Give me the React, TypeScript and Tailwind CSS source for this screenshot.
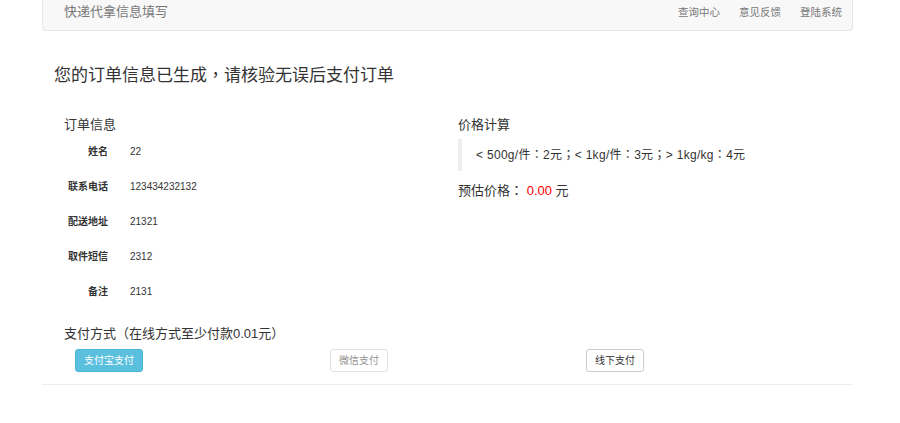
import React from 'react';

const FONT = { fontFamily: '"Liberation Sans", "Noto Sans CJK SC", sans-serif' };

const ORDER = [
  { label: '姓名', value: '22' },
  { label: '联系电话', value: '123434232132' },
  { label: '配送地址', value: '21321' },
  { label: '取件短信', value: '2312' },
  { label: '备注', value: '2131' },
];

// full-width punctuation drawn centered, as in the original page
const P = ({ c }: { c: string }) => (
  <span className="leading-none" style={{ fontFamily: '"Noto Sans CJK TC", sans-serif' }}>
    {c}
  </span>
);

export default function App() {
  return (
    <div className="min-h-[423px] w-full bg-white text-[#333]" style={FONT}>
      <div className="ml-[42px] w-[811px]">
        {/* Navbar */}
        <nav className="flex h-[31px] items-start justify-between rounded-b-[4px] border border-t-0 border-[#e7e7e7] bg-[#f8f8f8] pl-[21px] pr-[10px] pt-[3px] text-[#777]">
          <span className="text-[13px] leading-[18px]">快递代拿信息填写</span>
          <ul className="flex gap-[19px] pt-[1px] text-[10.5px] leading-[16px]">
            <li>查询中心</li>
            <li>意见反馈</li>
            <li>登陆系统</li>
          </ul>
        </nav>

        {/* Main panel */}
        <div className="border-b border-[#eee] pb-[12px]">
          <h1 className="ml-[12px] mt-[33px] h-[24px] text-[17px] leading-[24px] font-normal">
            您的订单信息已生成<P c="，" />请核验无误后支付订单
          </h1>

          <div className="mt-[28px] grid grid-cols-[394px_1fr] pl-[22px]">
            <section>
              <h2 className="text-[13px] leading-[18px]">订单信息</h2>
              <dl>
                {ORDER.map((row) => (
                  <div key={row.label} className="flex h-[35px] items-center text-[10px]">
                    <dt className="w-[44px] text-right font-bold">{row.label}</dt>
                    <dd className="ml-[22px]">{row.value}</dd>
                  </div>
                ))}
              </dl>
            </section>

            <section>
              <h2 className="text-[13px] leading-[18px]">价格计算</h2>
              <blockquote className="mt-[5px] flex h-[32px] items-center border-l-[4px] border-[#eee] pl-[14px] text-[12px] tracking-[0.3px]">
                <span>
                  &lt; 500g/件<P c="：" />2元<P c="；" />&lt; 1kg/件<P c="：" />3元<P c="；" />&gt; 1kg/kg<P c="：" />4元
                </span>
              </blockquote>
              <p className="mt-[11px] h-[18px] text-[13px] leading-[18px]">
                预估价格<P c="：" /> <span className="text-[#f00]">0.00</span> 元
              </p>
            </section>
          </div>

          <h2 className="ml-[22px] mt-[16px] h-[18px] text-[13px] leading-[18px]">
            支付方式<P c="（" />在线方式至少付款0.01元<P c="）" />
          </h2>
          <div className="mt-[4px] grid grid-cols-[255px_256px_1fr] pl-[33px]">
            <div>
              <button type="button" className="h-[23px] rounded-[3px] border border-[#46b8da] bg-[#5bc0de] px-[8px] text-[10px] text-white">
                支付宝支付
              </button>
            </div>
            <div>
              <button type="button" disabled className="h-[23px] rounded-[3px] border border-[#ccc] bg-white px-[8px] text-[10px] text-[#333] opacity-[0.55]">
                微信支付
              </button>
            </div>
            <div>
              <button type="button" className="h-[23px] rounded-[3px] border border-[#ccc] bg-white px-[8px] text-[10px] text-[#333]">
                线下支付
              </button>
            </div>
          </div>
        </div>
      </div>
    </div>
  );
}
